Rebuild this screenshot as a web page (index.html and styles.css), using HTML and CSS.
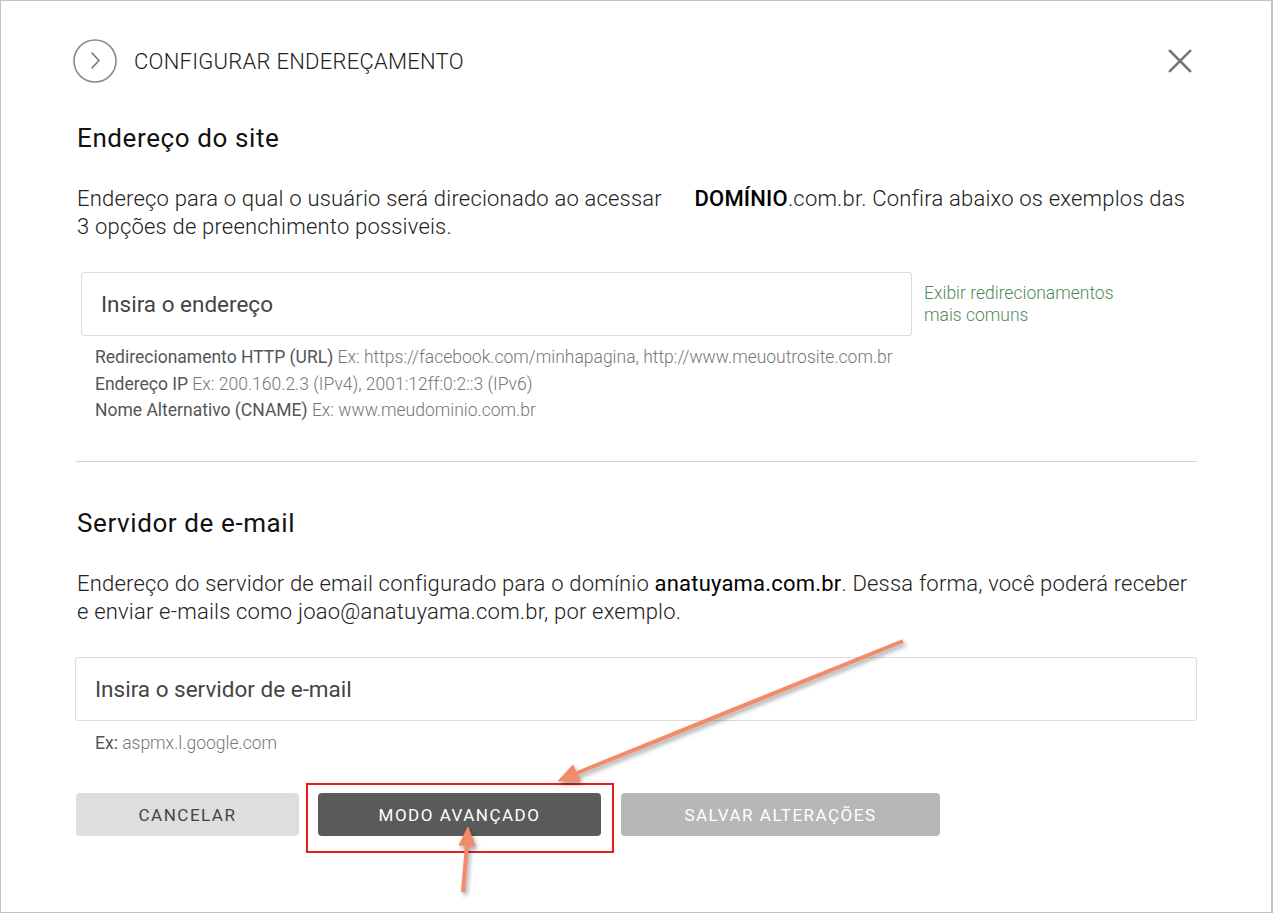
FILE: index.html
```html
<!DOCTYPE html>
<html lang="pt-BR">
<head>
    <meta charset="UTF-8">
    <meta name="viewport" content="width=device-width, initial-scale=1.0">
    <title>Configurar endereçamento</title>
    <link rel="stylesheet" href="styles.css">
</head>
<body>
    <div class="page">
        <header class="modal-header">
            <span class="circle-icon">
                <svg width="44" height="44" viewBox="0 0 44 44">
                    <circle cx="22" cy="22" r="21" fill="none" stroke="#8a8a8a" stroke-width="1.6"/>
                    <path d="M19 14 L26 21.5 L19 29" fill="none" stroke="#777" stroke-width="1.6" stroke-linecap="round" stroke-linejoin="round"/>
                </svg>
            </span>
            <h1 class="modal-title">CONFIGURAR ENDEREÇAMENTO</h1>
            <button class="close-btn" aria-label="Fechar">
                <svg width="24" height="24" viewBox="0 0 24 24">
                    <path d="M2 2 L22 22 M22 2 L2 22" stroke="#777" stroke-width="2.6" stroke-linecap="square"/>
                </svg>
            </button>
        </header>

        <section class="section">
            <h2 class="section-title">Endereço do site</h2>
            <p class="section-text text-site">
                Endereço para o qual o usuário será direcionado ao acessar <span class="domain"><b>DOMÍNIO</b>.com.br</span>. Confira abaixo os exemplos das 3 opções de preenchimento possiveis.
            </p>
            <div class="field-row">
                <input class="field field-site" type="text" placeholder="Insira o endereço">
                <a class="field-link" href="#">Exibir redirecionamentos<br>mais comuns</a>
            </div>
            <ul class="hints">
                <li><span class="hint-label">Redirecionamento HTTP (URL)</span> Ex: https://facebook.com/minhapagina, http://www.meuoutrosite.com.br</li>
                <li><span class="hint-label">Endereço IP</span> Ex: 200.160.2.3 (IPv4), 2001:12ff:0:2::3 (IPv6)</li>
                <li><span class="hint-label">Nome Alternativo (CNAME)</span> Ex: www.meudominio.com.br</li>
            </ul>
        </section>

        <hr class="divider">

        <section class="section">
            <h2 class="section-title title-mail">Servidor de e-mail</h2>
            <p class="section-text">
                Endereço do servidor de email configurado para o domínio <strong>anatuyama.com.br</strong>. Dessa forma, você poderá receber e enviar e-mails como joao@anatuyama.com.br, por exemplo.
            </p>
            <input class="field field-mail" type="text" placeholder="Insira o servidor de e-mail">
            <p class="hints hint-mail"><span class="hint-label">Ex:</span> aspmx.l.google.com</p>
        </section>

        <div class="actions">
            <button class="btn btn-cancel">CANCELAR</button>
            <button class="btn btn-advanced">MODO AVANÇADO</button>
            <button class="btn btn-save">SALVAR ALTERAÇÕES</button>
        </div>

        <div class="highlight-box"></div>
        <svg class="arrows" width="1273" height="913" viewBox="0 0 1273 913">
            <g fill="#f38a6a" stroke="#f38a6a">
                <line x1="903" y1="641" x2="577" y2="773" stroke-width="4"/>
                <polygon points="558,781 580,781 573,765" stroke-width="1"/>
                <line x1="463" y1="892" x2="467" y2="845" stroke-width="4"/>
                <polygon points="468,827 475,846 459,845" stroke-width="1"/>
            </g>
        </svg>
    </div>
</body>
</html>
```

FILE: styles.css
```css
* {
    box-sizing: border-box;
}

body {
    margin: 0;
    font-family: Roboto, "Liberation Sans", sans-serif;
    color: #222;
    background: #fff;
}

.page {
    position: relative;
    width: 1273px;
    height: 913px;
    border: 1px solid #c4c4c4;
    border-right-width: 2px;
    padding: 38px 75px 0 75px;
    overflow: hidden;
}

.modal-header {
    display: flex;
    align-items: center;
    height: 44px;
}

.circle-icon {
    display: flex;
    margin-left: -3px;
}

.modal-title {
    margin: 0 0 0 17px;
    font-size: 22px;
    font-weight: 300;
    color: #222;
    letter-spacing: 0.25px;
}

.close-btn {
    margin-left: auto;
    margin-right: 4px;
    padding: 0;
    border: 0;
    background: none;
    display: flex;
}

.section-title {
    margin: 40px 0 0 1px;
    font-size: 26px;
    font-weight: 400;
    line-height: 30px;
    letter-spacing: 0.6px;
    color: #111;
}

.title-mail {
    margin-top: 46px;
}

.section-text {
    margin: 32px 0 0 1px;
    font-size: 22px;
    font-weight: 300;
    line-height: 28px;
    letter-spacing: 0.2px;
    color: #222;
}

.text-site {
    max-width: 1112px;
}

.domain {
    margin-left: 27px;
}

.domain b {
    font-weight: 500;
    color: #000;
}

.section-text strong {
    font-weight: 400;
    color: #000;
}

.field-row {
    display: flex;
    align-items: center;
    margin-top: 31px;
    padding-left: 5px;
}

.field {
    height: 64px;
    border: 1px solid #dcdcdc;
    border-radius: 3px;
    padding: 0 19px;
    font-family: inherit;
    font-size: 22.5px;
    color: #333;
    outline: none;
}

.field::placeholder {
    color: #444;
}

.field-site {
    width: 831px;
}

.field-link {
    margin-left: 12px;
    font-size: 17.5px;
    font-weight: 300;
    line-height: 22px;
    color: #4f8a58;
    text-decoration: none;
}

.field-mail {
    display: block;
    width: calc(100% + 2px);
    margin: 31px 0 0 -1px;
}

.hints {
    margin: 8px 0 0 19px;
    padding: 0;
    list-style: none;
    font-size: 17.5px;
    font-weight: 300;
    line-height: 26.5px;
    color: #777;
}

.hint-label {
    font-weight: 400;
    color: #555;
}

.hint-mail {
    margin-top: 9px;
}

.divider {
    margin: 37px -1px 0 0;
    border: 0;
    border-top: 1px solid #d2d2d2;
}

.actions {
    display: flex;
    gap: 19px;
    margin-top: 37px;
}

.btn {
    height: 43px;
    border: 0;
    border-radius: 4px;
    font-family: inherit;
    font-size: 17px;
    font-weight: 400;
    letter-spacing: 1.5px;
}

.btn-cancel {
    width: 223px;
    background: #dedede;
    color: #444;
}

.btn-advanced {
    width: 283px;
    background: #5a5a5a;
    color: #fff;
}

.btn-save {
    width: 319px;
    margin-left: 1px;
    background: #b7b7b7;
    color: #fff;
}

/* anotações sobre a captura */
.highlight-box {
    position: absolute;
    left: 305px;
    top: 782px;
    width: 308px;
    height: 70px;
    border: 2px solid #e81c1c;
}

.arrows {
    position: absolute;
    left: -1px;
    top: -1px;
    filter: drop-shadow(2px 3px 2px rgba(0, 0, 0, 0.35));
    pointer-events: none;
}
```
